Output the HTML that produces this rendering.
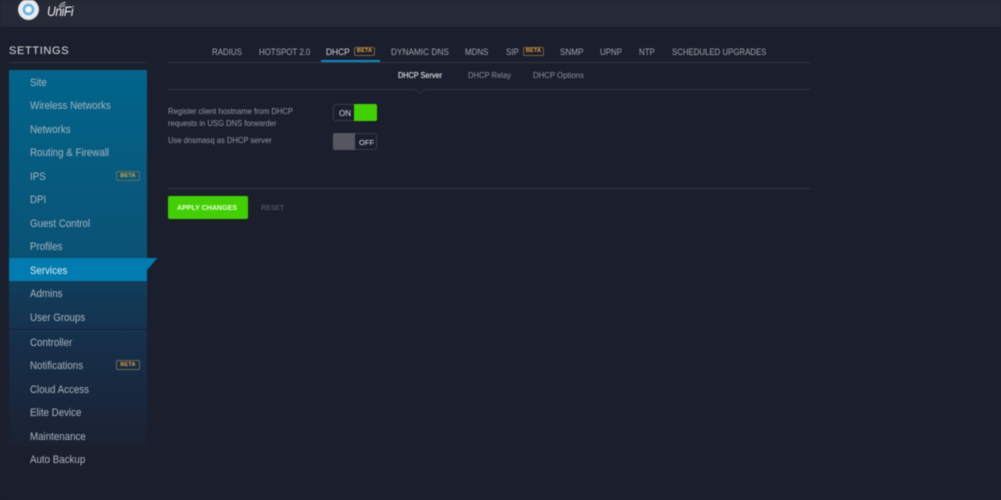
<!DOCTYPE html>
<html><head><meta charset="utf-8"><style>
html,body{margin:0;padding:0;background:#1b1e2c;}
#p{position:relative;width:1001px;height:500px;overflow:hidden;background:#1b1e2c;font-family:"Liberation Sans",sans-serif;filter:blur(.45px);}
#p div{position:absolute;white-space:nowrap;}
.n{left:30px;font-size:10.6px;color:#a9b5c0;line-height:14px;transform:scaleX(.92);transform-origin:left;}
.t{top:46px;font-size:8.8px;color:#a3a7ae;line-height:12px;transform:scaleX(.9);transform-origin:left;}
.s{top:70px;font-size:8.2px;color:#8f939b;line-height:11px;transform:scaleX(.95);transform-origin:left;}
.b{border:1px solid #7d6238;border-radius:2px;color:#e8a33a;font-size:5.5px;font-weight:bold;text-align:center;line-height:7px;height:7px;width:19px;letter-spacing:.2px;}
.bb{width:22px;height:8px;line-height:8px;border-color:#6a6a58;}
.l{left:168px;font-size:8.4px;color:#979aa2;line-height:12px;transform:scaleX(.91);transform-origin:left;}
</style></head><body><div id="p">
<div style="left:0;top:0;width:1001px;height:27px;background:#262936"></div>
<div style="left:18px;top:-1px;width:21px;height:21px;border-radius:50%;background:radial-gradient(circle closest-side at 50% 50%,#f2f6fa 0,#f2f6fa 28%,#62b4e8 34%,#62b4e8 52%,#eef1f4 60%,#dfe3e8 100%)"></div>
<div style="left:47px;top:4px;font-size:13.5px;font-style:italic;color:#eef0f2;line-height:16px;letter-spacing:-.5px;transform:scaleX(.9);transform-origin:left">UniFi</div>
<svg style="position:absolute;left:58px;top:1px" width="10" height="8" viewBox="0 0 10 8" fill="none" stroke="#dfe2e6" stroke-width=".8"><path d="M1 6.5C2 3.5 4 2 7.5 1.2M2.6 7C3.4 5 5 4 7.5 3.4"/></svg>

<div style="left:9px;top:44px;font-size:11px;color:#dfe1e4;letter-spacing:.65px;line-height:14px">SETTINGS</div>
<div style="left:9px;top:62px;width:138px;height:1px;background:#33363f"></div>

<div style="left:9px;top:70px;width:138px;height:377px;background:linear-gradient(180deg,#02658c 0%,#0a5274 50%,#113d5c 57%,#162f4a 72%,#1b2132 100%)"></div>
<div style="left:9px;top:258px;width:138px;height:23px;background:#007cb0"></div>
<svg style="position:absolute;left:147px;top:258px" width="11" height="23" viewBox="0 0 11 23"><path d="M0 0H10.5L0 12Z" fill="#007cb0"/></svg>
<div style="left:9px;top:329px;width:138px;height:1px;background:#172038"></div>

<div class="n" style="top:76px">Site</div>
<div class="n" style="top:99px">Wireless Networks</div>
<div class="n" style="top:123px">Networks</div>
<div class="n" style="top:146px">Routing &amp; Firewall</div>
<div class="n" style="top:170px">IPS</div>
<div class="b bb" style="left:116px;top:171px">BETA</div>
<div class="n" style="top:193px">DPI</div>
<div class="n" style="top:217px">Guest Control</div>
<div class="n" style="top:240px">Profiles</div>
<div class="n" style="top:264px;color:#e3edf3">Services</div>
<div class="n" style="top:287px">Admins</div>
<div class="n" style="top:311px">User Groups</div>
<div class="n" style="top:336px">Controller</div>
<div class="n" style="top:359px">Notifications</div>
<div class="b bb" style="left:116px;top:360px">BETA</div>
<div class="n" style="top:383px">Cloud Access</div>
<div class="n" style="top:406px">Elite Device</div>
<div class="n" style="top:430px">Maintenance</div>
<div class="n" style="top:453px">Auto Backup</div>

<div class="t" style="left:212px">RADIUS</div>
<div class="t" style="left:259px">HOTSPOT 2.0</div>
<div class="t" style="left:326px;color:#d9dbde;transform:scaleX(.95)">DHCP</div>
<div class="b" style="left:354px;top:47px">BETA</div>
<div class="t" style="left:391px;transform:scaleX(.94)">DYNAMIC DNS</div>
<div class="t" style="left:465px">MDNS</div>
<div class="t" style="left:506px">SIP</div>
<div class="b" style="left:523px;top:47px">BETA</div>
<div class="t" style="left:560px;transform:scaleX(.92)">SNMP</div>
<div class="t" style="left:600px">UPNP</div>
<div class="t" style="left:639px">NTP</div>
<div class="t" style="left:672px;transform:scaleX(.89)">SCHEDULED UPGRADES</div>
<div style="left:168px;top:62px;width:643px;height:1px;background:#34373f"></div>
<div style="left:321px;top:60px;width:59px;height:2px;background:#0a8ac4"></div>

<div class="s" style="left:398px;color:#dcdee1;text-shadow:0 0 .4px #dcdee1;transform:scaleX(.89)">DHCP Server</div>
<div class="s" style="left:468px;transform:scaleX(.93)">DHCP Relay</div>
<div class="s" style="left:533px">DHCP Options</div>
<div style="left:168px;top:89px;width:643px;height:1px;background:#34373f"></div>
<svg style="position:absolute;left:414px;top:89px" width="12" height="5" viewBox="0 0 12 5"><path d="M1 0L6 4.5L11 0" fill="#1b1e2c" stroke="#34373f"/></svg>

<div class="l" style="top:105px">Register client hostname from DHCP</div>
<div class="l" style="top:117px">requests in USG DNS forwarder</div>
<div class="l" style="top:134px">Use dnsmasq as DHCP server</div>

<div style="left:333px;top:104px;width:42px;height:15px;border:1px solid #3a3d47;border-radius:3px;background:#1b1e2c"></div>
<div style="left:354px;top:104px;width:23px;height:17px;background:#43d000;border-radius:0 2px 2px 0"></div>
<div style="left:339px;top:108px;font-size:8px;color:#dcdee0;line-height:11px">ON</div>
<div style="left:333px;top:133px;width:42px;height:15px;border:1px solid #3a3d47;border-radius:3px;background:#1b1e2c"></div>
<div style="left:333px;top:133px;width:22px;height:17px;background:#545760;border-radius:2px 0 0 2px"></div>
<div style="left:359px;top:137px;font-size:7.6px;color:#e0e2e4;line-height:11px">OFF</div>

<div style="left:168px;top:188px;width:643px;height:1px;background:#34373f"></div>
<div style="left:168px;top:196px;width:80px;height:23px;background:#43d000;border-radius:2px"></div>
<div style="left:177px;top:202px;font-size:7.2px;color:#eafbe0;line-height:11px;font-weight:bold;transform:scaleX(.98);transform-origin:left">APPLY CHANGES</div>
<div style="left:261px;top:202px;font-size:7.2px;font-weight:bold;color:#4e515a;line-height:11px;transform:scaleX(.96);transform-origin:left">RESET</div>
</div></body></html>
